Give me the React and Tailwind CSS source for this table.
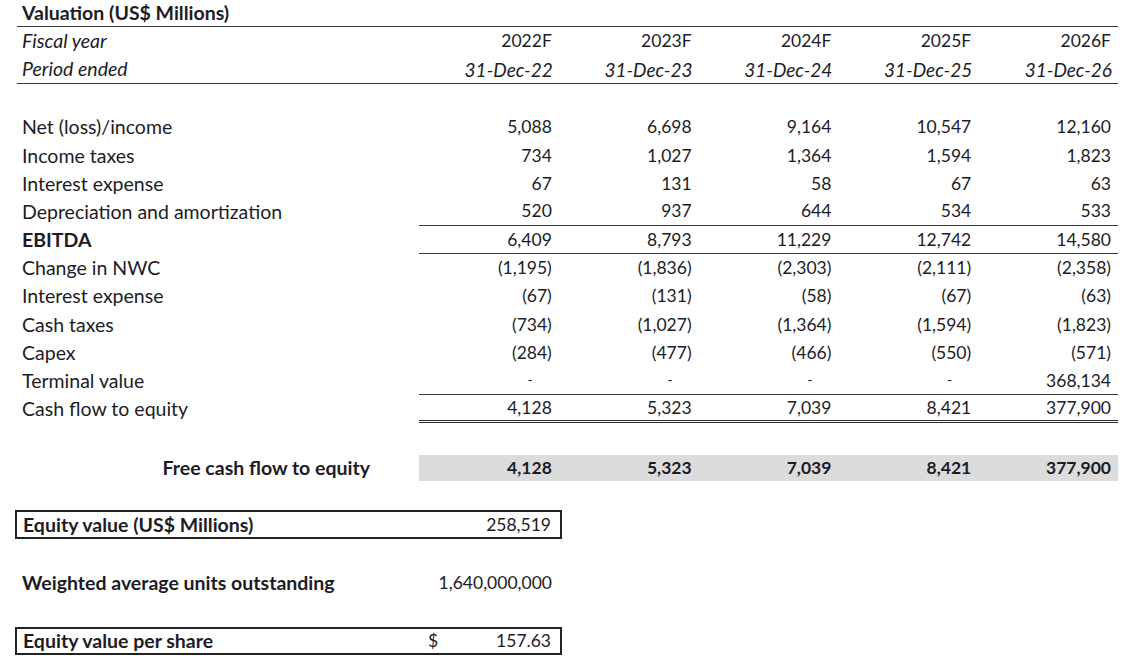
import React from 'react';

// Valuation table — cash flow to equity schedule
const years = ['2022F', '2023F', '2024F', '2025F', '2026F'];
const periods = ['31-Dec-22', '31-Dec-23', '31-Dec-24', '31-Dec-25', '31-Dec-26'];

const rows = [
  { label: 'Net (loss)/income', values: ['5,088', '6,698', '9,164', '10,547', '12,160'] },
  { label: 'Income taxes', values: ['734', '1,027', '1,364', '1,594', '1,823'] },
  { label: 'Interest expense', values: ['67', '131', '58', '67', '63'] },
  { label: 'Depreciation and amortization', values: ['520', '937', '644', '534', '533'], lineBelow: true },
  { label: 'EBITDA', values: ['6,409', '8,793', '11,229', '12,742', '14,580'], bold: true, lineBelow: true },
  { label: 'Change in NWC', values: ['(1,195)', '(1,836)', '(2,303)', '(2,111)', '(2,358)'] },
  { label: 'Interest expense', values: ['(67)', '(131)', '(58)', '(67)', '(63)'] },
  { label: 'Cash taxes', values: ['(734)', '(1,027)', '(1,364)', '(1,594)', '(1,823)'] },
  { label: 'Capex', values: ['(284)', '(477)', '(466)', '(550)', '(571)'] },
  { label: 'Terminal value', values: ['-', '-', '-', '-', '368,134'], lineBelow: true },
  { label: 'Cash flow to equity', values: ['4,128', '5,323', '7,039', '8,421', '377,900'], doubleBelow: true },
];

const grid = 'grid grid-cols-[419px_repeat(5,139.8px)]';

const Row = ({ row }) => (
  <div className={`${grid} h-[28.2px] items-center`}>
    <div className={`pl-[22px] text-[19.5px] ${row.bold ? 'font-bold' : ''}`}>{row.label}</div>
    {row.values.map((v, i) => (
      <div
        key={i}
        className={`h-full flex items-center justify-end ${
          row.lineBelow ? 'border-b-[1.5px] border-[#3a3a3a]' : ''
        } ${row.doubleBelow ? 'border-b-[3px] border-double border-[#2a2a2a]' : ''} ${
          v === '-' ? 'pr-[26px] text-[14px]' : 'pr-[7px]'
        }`}
      >
        {v}
      </div>
    ))}
  </div>
);

export default function App() {
  return (
    <div
      className="w-[1143px] h-[656px] bg-white text-[#1c1c26] text-[17.5px] leading-none overflow-hidden"
      style={{ fontFamily: 'Lato, "Open Sans", sans-serif' }}
    >
      {/* Title */}
      <div className="ml-[17px] w-[1101px] h-[27px] flex items-center pl-[5px] text-[19.5px] font-bold border-b-[1.5px] border-[#3a3a3a]">
        Valuation (US$ Millions)
      </div>

      {/* Header */}
      <div className="border-b-[1.5px] border-[#3a3a3a] ml-[17px] w-[1101px]">
        <div className="grid grid-cols-[402px_repeat(5,139.8px)] h-[28px] items-center">
          <div className="pl-[5px] italic text-[19.5px]">Fiscal year</div>
          {years.map((y) => (
            <div key={y} className="text-right pr-[7px]">{y}</div>
          ))}
        </div>
        <div className="grid grid-cols-[402px_repeat(5,139.8px)] h-[28px] items-center">
          <div className="pl-[5px] italic text-[19.5px]">Period ended</div>
          {periods.map((p) => (
            <div key={p} className="text-right pr-[6px] italic text-[19px]">{p}</div>
          ))}
        </div>
      </div>

      <div className="h-[29px]" />

      {rows.map((r, i) => (
        <Row key={i} row={r} />
      ))}

      {/* Free cash flow to equity */}
      <div className={`${grid} h-[26px] mt-[32px] items-center font-bold`}>
        <div className="text-right pr-[49px] text-[19.5px]">Free cash flow to equity</div>
        {rows[10].values.map((v, i) => (
          <div key={i} className="h-full flex items-center justify-end pr-[7px] bg-[#dcdcdc]">
            {v}
          </div>
        ))}
      </div>

      {/* Equity value */}
      <div className="mt-[29px] ml-[15px] w-[547px] h-[29px] border-2 border-[#222] flex items-center justify-between pl-[6px] pr-[9px]">
        <span className="font-bold text-[19.5px]">Equity value (US$ Millions)</span>
        <span>258,519</span>
      </div>

      <div className="mt-[31px] w-[562px] h-[26px] flex items-center justify-between pl-[22px] pr-[10px]">
        <span className="font-bold text-[19.5px]">Weighted average units outstanding</span>
        <span>1,640,000,000</span>
      </div>

      <div className="mt-[31px] ml-[15px] w-[547px] h-[28px] border-2 border-[#222] flex items-center pl-[6px] pr-[9px]">
        <span className="font-bold flex-1 text-[19.5px]">Equity value per share</span>
        <span className="w-[123px] flex justify-between">
          <span>$</span>
          <span>157.63</span>
        </span>
      </div>
    </div>
  );
}
